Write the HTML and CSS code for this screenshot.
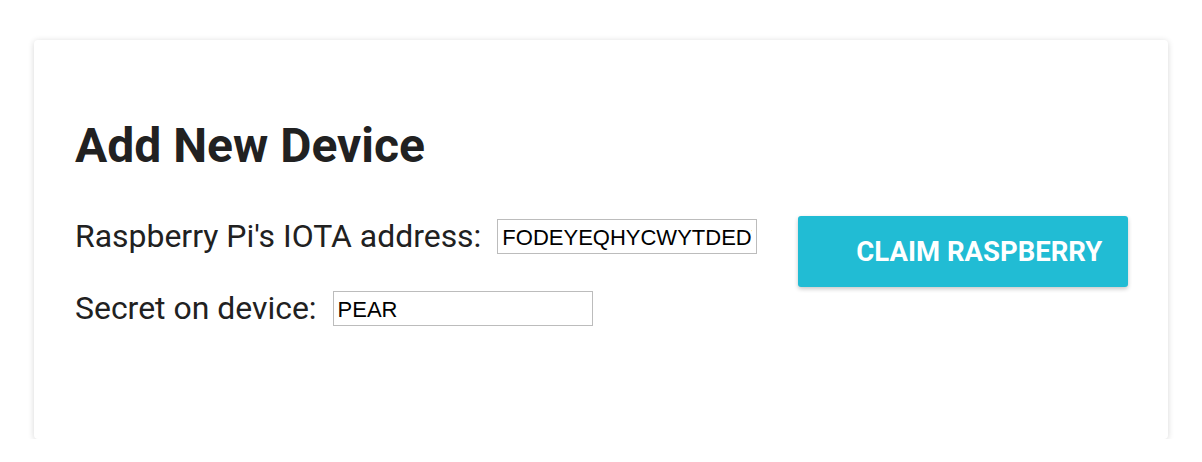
FILE: index.html
```html
<!DOCTYPE html>
<html>
<head>
<meta charset="utf-8">
<link rel="stylesheet" href="styles.css">
</head>
<body>
<div class="card">
  <h1 class="title">Add New Device</h1>
  <div class="form">
    <div class="fields">
      <div class="row">
        <label class="label">Raspberry Pi's IOTA address:</label>
        <input class="input" type="text" value="FODEYEQHYCWYTDEDVXZGNLJQ">
      </div>
      <div class="row">
        <label class="label">Secret on device:</label>
        <input class="input" type="text" value="PEAR">
      </div>
    </div>
    <button class="btn">CLAIM RASPBERRY</button>
  </div>
</div>
</body>
</html>
```
FILE: styles.css
```css
html, body {
  margin: 0;
  padding: 0;
  background: #ffffff;
}
body {
  font-family: Roboto, "Liberation Sans", sans-serif;
  color: #212121;
}
.card {
  box-sizing: border-box;
  margin: 40px 0 0 34px;
  width: 1134px;
  height: 399px;
  background: #fff;
  border-radius: 4px;
  box-shadow: 0 1px 6px rgba(0, 0, 0, 0.16);
  padding: 78px 40px 0 41px;
}
.title {
  margin: 0;
  font-size: 48px;
  line-height: 56px;
  font-weight: 700;
  color: #212121;
}
.form {
  display: flex;
  align-items: flex-start;
  margin-top: 44px;
}
.fields {
  display: flex;
  flex-direction: column;
  gap: 35px;
  flex-shrink: 0;
}
.row {
  display: flex;
  align-items: center;
  height: 37px;
}
.label {
  font-size: 31.95px;
  line-height: 37px;
  color: #212121;
  margin-right: 16px;
  white-space: nowrap;
  flex-shrink: 0;
}
.input {
  box-sizing: border-box;
  flex-shrink: 0;
  width: 260px;
  height: 35px;
  border: 1px solid #bcbcbc;
  border-radius: 0;
  padding: 2px 4px 0;
  font-family: "Liberation Sans", Arial, sans-serif;
  font-size: 22px;
  color: #000;
  outline: none;
  background: #fff;
}
.btn {
  box-sizing: border-box;
  flex-shrink: 0;
  margin: -2px 0 0 41px;
  width: 330px;
  height: 71px;
  padding: 0 20px 0 58px;
  border: none;
  border-radius: 3px;
  background: #21bcd4;
  color: #fff;
  font-family: Roboto, "Liberation Sans", sans-serif;
  font-size: 27.5px;
  font-weight: 700;
  text-align: left;
  white-space: nowrap;
  box-shadow: 0 2px 4px rgba(0, 0, 0, 0.22);
}
```
